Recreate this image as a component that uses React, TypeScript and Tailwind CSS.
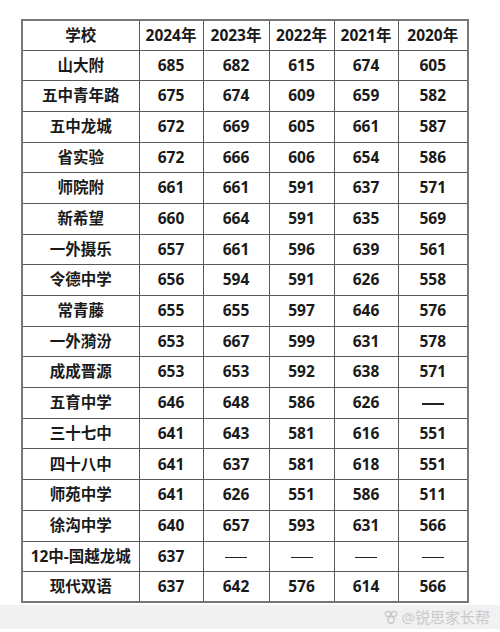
import React from "react";

const years = ["2024年", "2023年", "2022年", "2021年", "2020年"];

const rows: [string, string, string, string, string, string][] = [
  ["山大附", "685", "682", "615", "674", "605"],
  ["五中青年路", "675", "674", "609", "659", "582"],
  ["五中龙城", "672", "669", "605", "661", "587"],
  ["省实验", "672", "666", "606", "654", "586"],
  ["师院附", "661", "661", "591", "637", "571"],
  ["新希望", "660", "664", "591", "635", "569"],
  ["一外摄乐", "657", "661", "596", "639", "561"],
  ["令德中学", "656", "594", "591", "626", "558"],
  ["常青藤", "655", "655", "597", "646", "576"],
  ["一外漪汾", "653", "667", "599", "631", "578"],
  ["成成晋源", "653", "653", "592", "638", "571"],
  ["五育中学", "646", "648", "586", "626", "—"],
  ["三十七中", "641", "643", "581", "616", "551"],
  ["四十八中", "641", "637", "581", "618", "551"],
  ["师苑中学", "641", "626", "551", "586", "511"],
  ["徐沟中学", "640", "657", "593", "631", "566"],
  ["12中-国越龙城", "637", "—", "—", "—", "—"],
  ["现代双语", "637", "642", "576", "614", "566"],
];

const widths = ["w-[117px]", "w-[64px]", "w-[66px]", "w-[65px]", "w-[64px]", "w-[70px]"];

const Cell: React.FC<{ value: string; i: number }> = ({ value, i }) => (
  <td className={`${widths[i]} border border-[#5a5a5a] text-center align-middle p-0`}>
    {value === "—" ? (
      <span className="inline-block w-[22px] h-[1.5px] bg-[#222] align-middle" />
    ) : (
      value
    )}
  </td>
);

export default function App() {
  return (
    <div
      className="w-[500px] h-[632px] bg-white flex flex-col text-[#1a1a1a] font-bold"
      style={{ fontFamily: '"Open Sans", "Noto Sans CJK SC", sans-serif' }}
    >
      <div className="pt-[19px] pl-[21px]">
        <table className="border-collapse border-2 border-[#777] text-[15.5px] leading-none">
          <thead>
            <tr className="h-[30px]">
              <Cell value="学校" i={0} />
              {years.map((y, i) => (
                <Cell key={y} value={y} i={i + 1} />
              ))}
            </tr>
          </thead>
          <tbody>
            {rows.map((r) => (
              <tr key={r[0]} className="h-[30.7px]">
                {r.map((v, i) => (
                  <Cell key={i} value={v} i={i} />
                ))}
              </tr>
            ))}
          </tbody>
        </table>
      </div>
      <div className="mt-[2px] h-[24px] bg-[#f1f1f1] flex items-center justify-end pr-[10px] gap-[3px] text-[#c9c9c9] text-[15px] font-normal">
        <svg width="16" height="16" viewBox="0 0 16 16" fill="none" stroke="#c9c9c9" strokeWidth="1.4">
          <circle cx="5" cy="5" r="2.6" />
          <circle cx="11" cy="5" r="2.6" />
          <circle cx="8" cy="11" r="3.2" />
        </svg>
        <span>@锐思家长帮</span>
      </div>
    </div>
  );
}
